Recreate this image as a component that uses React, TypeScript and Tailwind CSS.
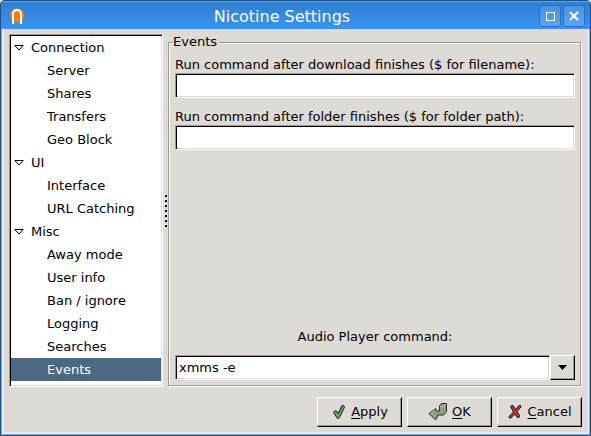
import type { ReactNode } from "react";

const sections = [
  { title: "Connection", pages: ["Server", "Shares", "Transfers", "Geo Block"] },
  { title: "UI", pages: ["Interface", "URL Catching"] },
  { title: "Misc", pages: ["Away mode", "User info", "Ban / ignore", "Logging", "Searches", "Events"] },
];

const sunken =
  "border border-t-[#9c9993] border-l-[#9c9993] border-b-white border-r-white bg-white shadow-[inset_1px_1px_0_#000,inset_-1px_-1px_0_#dedbd6]";
const raised =
  "border border-t-white border-l-white border-b-black border-r-black bg-[#dedbd6] shadow-[inset_-1px_-1px_0_#9c9993]";

function Logo() {
  return (
    <svg className="size-4" viewBox="0 0 16 16" aria-hidden="true">
      <circle cx="8" cy="7.500" r="7" fill="#f97e08" />
      <path d="M4 16V6.500C4 3.500 5.800 2 8 2s4 1.500 4 4.500V16" fill="none" stroke="#fff" strokeWidth="2" />
    </svg>
  );
}

function ApplyIcon() {
  return (
    <svg className="h-4 w-4" viewBox="0 0 16 16" aria-hidden="true">
      <path
        d="M2.500 8.500l1-1.500h2l1.700 2.500L11 1.500h1.500l1 1.500L8.500 13.500l-1 1H6.500z"
        fill="#74a066"
        stroke="#10180c"
        strokeLinejoin="round"
      />
    </svg>
  );
}

function OkIcon() {
  return (
    <svg className="h-[18px] w-5" viewBox="0 0 20 18" aria-hidden="true">
      <path
        d="M11.500 3l2-2.500h5v8L15.500 12H10l-2 4.500H7L1 10.500 8 5.500V8h3.500z"
        fill="#8fa087"
        stroke="#20281e"
        strokeLinejoin="round"
      />
      <path d="M12.500 3.500h3M16 3l2-2" fill="none" stroke="#b9c8b2" />
      <path d="M2.500 10.500L7.500 7" fill="none" stroke="#b9c8b2" />
    </svg>
  );
}

function CancelIcon() {
  return (
    <svg className="h-4 w-4" viewBox="0 0 16 16" aria-hidden="true">
      <path
        d="M3.500 2.500L5 1.500h1L8.500 5.500 12 1.500h1.500l.5 1.500-4 4.500 2.500 4-.5 2h-1.500l-3-3.500L4 14H2.500L2 12.500 6.500 8z"
        fill="#b83a40"
        stroke="#200c0c"
        strokeLinejoin="round"
      />
    </svg>
  );
}

function TitleButton({ label, children }: { label: string; children: ReactNode }) {
  return (
    <button
      type="button"
      aria-label={label}
      className="flex size-[22px] items-center justify-center rounded-[3px] border border-[#2b6fc0] bg-linear-to-b from-[#4793e2] to-[#5ba4f4]"
    >
      <svg className="size-[10px]" viewBox="0 0 10 10" fill="none" stroke="#fff" aria-hidden="true">
        {children}
      </svg>
    </button>
  );
}

function ActionButton({ icon, text }: { icon: ReactNode; text: string }) {
  return (
    <button type="button" className={`flex h-[30px] w-[85px] items-center justify-center gap-1 ${raised}`}>
      {icon}
      <span>
        <span className="underline underline-offset-2">{text[0]}</span>
        {text.slice(1)}
      </span>
    </button>
  );
}

function CommandField({ id, label }: { id: string; label: string }) {
  return (
    <div className="flex flex-col">
      <label htmlFor={id} className="leading-4">
        {label}
      </label>
      <input id={id} type="text" className={`h-[25px] w-full px-1 outline-none ${sunken}`} />
    </div>
  );
}

export default function App() {
  return (
    <div className="min-h-screen bg-white font-['DejaVu_Sans',sans-serif] text-[13px] text-black">
      <main className="flex min-h-screen flex-col overflow-hidden rounded-t-[4px] border border-[#1c4f86] bg-[#dedbd6]">
        <header className="flex h-7 items-center border-t border-[#5ba3ec] bg-linear-to-b from-[#2f7fd2] to-[#3a92f2] pr-[5px] pl-2">
          <Logo />
          <h1 className="flex-1 pt-[2px] text-center text-[16px] leading-5 text-white">Nicotine Settings</h1>
          <div className="flex gap-[2px]">
            <TitleButton label="Maximize">
              <path d="M.5 1h9M1 .5v9M9 .5v9M.5 9h9M.5 1.500h9" shapeRendering="crispEdges" />
            </TitleButton>
            <TitleButton label="Close">
              <path d="M1 1l8 8M9 1l-8 8" strokeWidth="2.200" />
            </TitleButton>
          </div>
        </header>

        <div className="flex flex-1 flex-col border border-t-0 border-[#7eaee6]">
          <div className="flex flex-1 flex-col border-2 border-t-0 border-[#ebe8ec] px-[5px] pt-[5px] pb-[5px]">
            <div className="flex flex-1">
              <nav aria-label="Settings pages" className={`w-[154px] shrink-0 p-px ${sunken}`}>
                {sections.map((section) => (
                  <section key={section.title}>
                    <h2 className="flex h-[23px] items-center gap-[7px] pl-[3px]">
                      <svg className="h-[6px] w-[10px]" viewBox="0 0 10 6" aria-hidden="true">
                        <path d="M.8.500h8.400L5 5z" fill="#fff" stroke="#000" />
                      </svg>
                      {section.title}
                    </h2>
                    <ul>
                      {section.pages.map((page) => (
                        <li key={page}>
                          <a
                            href="#"
                            className={`flex h-[23px] items-center pl-9 ${page === "Events" ? "bg-[#4b6983] text-white" : ""}`}
                          >
                            {page}
                          </a>
                        </li>
                      ))}
                    </ul>
                  </section>
                ))}
              </nav>

              <div className="flex w-[5px] shrink-0 flex-col items-center justify-center gap-[3px]">
                {[0, 1, 2, 3, 4, 5, 6].map((dot) => (
                  <span key={dot} className="size-[2px] bg-black shadow-[-1px_-1px_0_#fff]" />
                ))}
              </div>

              <fieldset className="mr-px mb-px flex min-w-0 flex-1 flex-col border border-[#9c9993] pr-[5px] pb-[5px] pl-[6px] shadow-[inset_1px_1px_0_#fff,1px_1px_0_#fff]">
                <legend className="-ml-[2px] bg-[#dedbd6] pr-[2px] leading-4">Events</legend>
                <div className="flex flex-1 flex-col gap-[11px] pt-[7px]">
                  <CommandField id="after-download" label="Run command after download finishes ($ for filename):" />
                  <CommandField id="after-folder" label="Run command after folder finishes ($ for folder path):" />
                  <div className="mt-auto flex flex-col gap-[10px]">
                    <label htmlFor="player" className="text-center leading-4">
                      Audio Player command:
                    </label>
                    <div className="flex">
                      <input
                        id="player"
                        type="text"
                        defaultValue="xmms -e"
                        className={`h-[25px] min-w-0 flex-1 px-[3px] outline-none ${sunken}`}
                      />
                      <button
                        type="button"
                        aria-label="Show commands"
                        className={`flex h-[25px] w-[25px] items-center justify-center ${raised}`}
                      >
                        <svg className="h-[5px] w-[9px]" viewBox="0 0 9 5" aria-hidden="true">
                          <path d="M0 0h9L4.500 5z" />
                        </svg>
                      </button>
                    </div>
                  </div>
                </div>
              </fieldset>
            </div>

            <footer className="mt-[10px] flex justify-end gap-[5px]">
              <ActionButton icon={<ApplyIcon />} text="Apply" />
              <ActionButton icon={<OkIcon />} text="OK" />
              <ActionButton icon={<CancelIcon />} text="Cancel" />
            </footer>
          </div>
        </div>
      </main>
    </div>
  );
}
